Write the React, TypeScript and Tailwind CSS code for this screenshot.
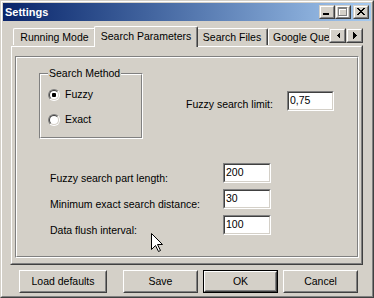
import type { ReactNode } from 'react';

function Sunken({ w, value }: { w: string; value: string }) {
  return (
    <div className={`${w} h-[20px] border border-t-[#808080] border-l-[#808080] border-r-white border-b-white`}>
      <div className="h-full border border-t-[#404040] border-l-[#404040] border-r-[#d4d0c8] border-b-[#d4d0c8] bg-white pl-[1px] pt-[1px]">
        {value}
      </div>
    </div>
  );
}

function Radio({ label, checked }: { label: string; checked?: boolean }) {
  return (
    <div className="h-[13px] flex items-center">
      <div className="ml-[7px] w-[12px] h-[12px] rounded-full border border-t-[#808080] border-l-[#808080] border-r-white border-b-white">
        <div className="w-full h-full rounded-full border border-t-[#404040] border-l-[#404040] border-r-[#d4d0c8] border-b-[#d4d0c8] bg-white flex items-center justify-center">
          {checked && <div className="w-[4px] h-[4px] rounded-[1px] bg-black" />}
        </div>
      </div>
      <span className="ml-[5px]">{label}</span>
    </div>
  );
}

function Button({ w, children, isDefault }: { w: string; children: ReactNode; isDefault?: boolean }) {
  if (isDefault) {
    return (
      <div className={`${w} h-[23px] border border-black`}>
        <div className="h-full border border-t-white border-l-white border-r-[#404040] border-b-[#404040]">
          <div className="h-full border border-t-[#d4d0c8] border-l-[#d4d0c8] border-r-[#808080] border-b-[#808080] flex items-center justify-center">
            {children}
          </div>
        </div>
      </div>
    );
  }
  return (
    <div className={`${w} h-[23px] border border-t-white border-l-white border-r-[#404040] border-b-[#404040]`}>
      <div className="h-full border border-t-[#d4d0c8] border-l-[#d4d0c8] border-r-[#808080] border-b-[#808080] flex items-center justify-center">
        {children}
      </div>
    </div>
  );
}

function SmallButton({ w, h, children }: { w: string; h: string; children: ReactNode }) {
  return (
    <div className={`${w} ${h} bg-[#d4d0c8] border border-t-[#d4d0c8] border-l-[#d4d0c8] border-r-[#404040] border-b-[#404040]`}>
      <div className="h-full border border-t-white border-l-white border-r-[#808080] border-b-[#808080] flex items-center justify-center">
        {children}
      </div>
    </div>
  );
}

function Tab({ w, children }: { w: string; children: ReactNode }) {
  return (
    <div className={`${w} h-[17px] pt-[2px] text-center whitespace-nowrap border-t border-l border-r border-t-white border-l-white border-r-[#404040] rounded-t-[2px] shadow-[inset_-1px_0_#808080]`}>
      {children}
    </div>
  );
}

export default function App() {
  return (
    <div className="w-[374px] h-[298px] bg-[#d4d0c8] text-black text-[10.5px] leading-[13px] font-['Liberation_Sans',Arial,sans-serif] border border-t-[#d4d0c8] border-l-[#d4d0c8] border-r-[#404040] border-b-[#404040]">
      <div className="h-full p-[1px] border border-t-white border-l-white border-r-[#808080] border-b-[#808080] flex flex-col">
        {/* title bar */}
        <div className="h-[18px] shrink-0 flex items-center pl-[2px] pr-[2px] bg-linear-to-r from-[#0a246a] to-[#a6caf0]">
          <span className="flex-1 text-[11px] font-bold text-white">Settings</span>
          <SmallButton w="w-[16px]" h="h-[14px]">
            <svg width="12" height="10" viewBox="0 0 12 10" shapeRendering="crispEdges">
              <rect x="2" y="6" width="6" height="2" fill="#000" />
            </svg>
          </SmallButton>
          <SmallButton w="w-[16px]" h="h-[14px]">
            <svg width="12" height="10" viewBox="0 0 12 10" shapeRendering="crispEdges">
              <g fill="#fff">
                <rect x="2" y="1" width="9" height="2" />
                <rect x="2" y="1" width="1" height="9" />
                <rect x="10" y="1" width="1" height="9" />
                <rect x="2" y="9" width="9" height="1" />
              </g>
              <g fill="#808080">
                <rect x="1" y="0" width="9" height="2" />
                <rect x="1" y="0" width="1" height="9" />
                <rect x="9" y="0" width="1" height="9" />
                <rect x="1" y="8" width="9" height="1" />
              </g>
            </svg>
          </SmallButton>
          <div className="ml-[2px]">
            <SmallButton w="w-[16px]" h="h-[14px]">
              <svg width="12" height="10" viewBox="0 0 12 10" shapeRendering="crispEdges" fill="#000">
                <rect x="2" y="1" width="2" height="1" />
                <rect x="8" y="1" width="2" height="1" />
                <rect x="3" y="2" width="2" height="1" />
                <rect x="7" y="2" width="2" height="1" />
                <rect x="4" y="3" width="4" height="1" />
                <rect x="5" y="4" width="2" height="1" />
                <rect x="4" y="5" width="4" height="1" />
                <rect x="3" y="6" width="2" height="1" />
                <rect x="7" y="6" width="2" height="1" />
                <rect x="2" y="7" width="2" height="1" />
                <rect x="8" y="7" width="2" height="1" />
              </svg>
            </SmallButton>
          </div>
        </div>

        {/* tabs */}
        <div className="h-[24px] shrink-0 flex items-end pl-[10px]">
          <div className="w-[316px] flex items-end">
            <Tab w="w-[83px]">Running Mode</Tab>
            <div className="relative z-10 w-[104px] -mx-[2px] h-[21px] -mb-[2px] pt-[3px] text-center whitespace-nowrap bg-[#d4d0c8] border-t border-l border-r border-t-white border-l-white border-r-[#404040] rounded-t-[2px] shadow-[inset_-1px_0_#808080]">
              Search Parameters
            </div>
            <Tab w="w-[72px]">Search Files</Tab>
            <div className="w-[61px] h-[17px] pt-[2px] pl-[4px] whitespace-nowrap overflow-hidden border-t border-l border-t-white border-l-white rounded-tl-[2px]">
              Google Queries
            </div>
          </div>
          <div className="flex mb-[2px]">
            <SmallButton w="w-[17px]" h="h-[15px]">
              <svg width="4" height="7" viewBox="0 0 4 7" shapeRendering="crispEdges">
                <path d="M4 0 L4 7 L0.5 3.5 Z" fill="#000" />
              </svg>
            </SmallButton>
            <SmallButton w="w-[17px]" h="h-[15px]">
              <svg width="4" height="7" viewBox="0 0 4 7" shapeRendering="crispEdges">
                <path d="M0 0 L0 7 L3.5 3.5 Z" fill="#000" />
              </svg>
            </SmallButton>
          </div>
        </div>

        {/* tab page */}
        <div className="ml-[7px] w-[353px] h-[220px] shrink-0 border border-t-[#d4d0c8] border-l-[#d4d0c8] border-r-[#404040] border-b-[#404040]">
          <div className="h-full pt-[9px] pl-[3px] border border-t-white border-l-white border-r-[#808080] border-b-[#808080]">
            <div className="w-[344px] h-[202px] border border-t-[#808080] border-l-[#808080] border-r-white border-b-white">
              <div className="relative h-full border border-t-white border-l-white border-r-[#808080] border-b-[#808080]">
                <div className="flex items-start pt-[15px] pl-[22px]">
                  <div className="w-[104px] h-[66px] border border-t-[#808080] border-l-[#808080] border-r-white border-b-white">
                    <div className="h-full border border-t-white border-l-white border-r-[#808080] border-b-[#808080]">
                      <div className="w-fit -mt-[8px] ml-[7px] px-[1px] bg-[#d4d0c8]">Search Method</div>
                      <div className="mt-[8px]">
                        <Radio label="Fuzzy" checked />
                      </div>
                      <div className="mt-[12px]">
                        <Radio label="Exact" />
                      </div>
                    </div>
                  </div>
                  <div className="ml-[43px] flex items-start">
                    <div className="w-[101px] mt-[25px]">Fuzzy search limit:</div>
                    <div className="mt-[18px]">
                      <Sunken w="w-[47px]" value="0,75" />
                    </div>
                  </div>
                </div>

                <div className="mt-[24px] pl-[33px] flex flex-col gap-[4px]">
                  <div className="flex items-start">
                    <div className="w-[173px] mt-[9px]">Fuzzy search part length:</div>
                    <Sunken w="w-[48px]" value="200" />
                  </div>
                  <div className="flex items-start">
                    <div className="w-[173px] mt-[9px]">Minimum exact search distance:</div>
                    <Sunken w="w-[48px]" value="30" />
                  </div>
                  <div className="flex items-start">
                    <div className="w-[173px] mt-[9px]">Data flush interval:</div>
                    <Sunken w="w-[48px]" value="100" />
                  </div>
                </div>

                {/* mouse pointer */}
                <svg className="absolute left-[134px] top-[175px]" width="13" height="20" viewBox="0 0 13 20">
                  <path d="M0.5 0.5 L0.5 16.5 L4.5 12.5 L7.5 18.5 L9.5 17.5 L6.5 11.5 L11.5 11.5 Z" fill="#fff" stroke="#000" strokeWidth="1" />
                </svg>
              </div>
            </div>
          </div>
        </div>

        {/* buttons */}
        <div className="mt-[5px] pl-[16px] flex">
          <Button w="w-[88px]">Load defaults</Button>
          <div className="ml-[16px]">
            <Button w="w-[75px]">Save</Button>
          </div>
          <div className="ml-[5px]">
            <Button w="w-[75px]" isDefault>OK</Button>
          </div>
          <div className="ml-[5px]">
            <Button w="w-[75px]">Cancel</Button>
          </div>
        </div>
      </div>
    </div>
  );
}
